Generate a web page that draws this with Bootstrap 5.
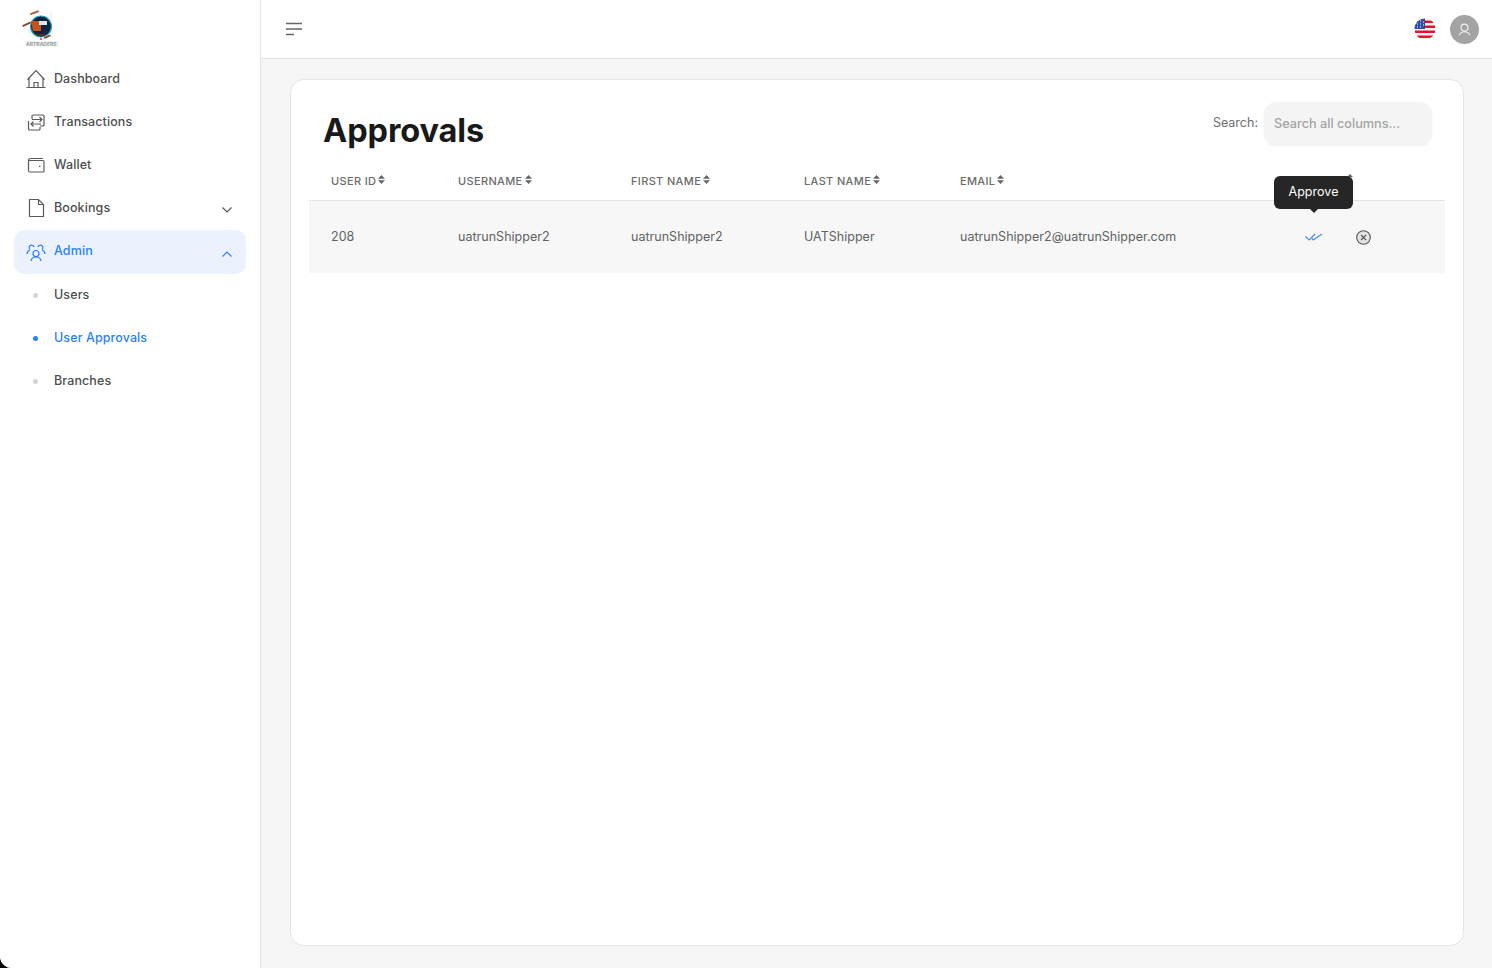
<!DOCTYPE html>
<html lang="en"><head><meta charset="utf-8"><title>Approvals</title>
<link href="https://cdn.jsdelivr.net/npm/bootstrap@5.3.0/dist/css/bootstrap.min.css" rel="stylesheet">
<style>
html,body{height:100%;overflow:hidden}
body{font-family:Inter,"Liberation Sans",sans-serif;background:#000;color:#4b4b4b}
.app-shell{height:968px;background:#f5f5f5;border-bottom-left-radius:12px;overflow:hidden}
.side{width:261px;flex:none;background:#fff;border-right:1px solid #e4e4e4;padding:0 14px}
.logo-box{height:58px;padding:9px 0 0 7px}
.menu-item{height:43px;display:flex;align-items:center;font-size:12.5px;font-weight:500;color:#4f4f4f;padding-left:12px;border-radius:10px;letter-spacing:.1px;position:relative}
.menu-item svg.ic{width:20px;height:20px;margin:-1px 8px 0 0;flex:none;fill:none;stroke:#5a5a5a;stroke-width:1.2}
.menu-item .lbl{margin-top:-1px}
.menu-item .chev{position:absolute;left:207px;top:19px;width:12px;height:8px;fill:none;stroke:#555;stroke-width:1.2}
.menu-open{background:#ebf2fe;color:#2b7fff;height:44px}
.menu-open .chev{top:20px}
.menu-open svg.ic,.menu-open .chev{stroke:#2b7fff!important}
.sub-on{color:#2b7fff}
.dot{width:5px;height:5px;border-radius:50%;background:#d5d5d5;margin:0 16px 0 7px;flex:none}
.sub-on .dot{background:#2b7fff}
.top-bar{height:59px;background:#fff;border-bottom:1px solid #e2e2e2;padding:0 13px 0 24px}
.main-area{padding:20px 28px 22px 29px}
.panel{background:#fff;border:1px solid #e6e6e6;border-radius:14px;height:867px;padding:22px 18px 0}
.page-title{font-size:32.5px;font-weight:700;color:#191919;margin:9px 0 0 14px;line-height:40px;letter-spacing:-.1px}
.search-lbl{font-size:12.5px;color:#6f6f6f;margin-top:12px}
.search-in{width:168px;height:43px;background:#f4f4f4;border:0;border-radius:12px;font-size:12.7px;padding:0 10px;box-shadow:0 1px 2px rgba(0,0,0,.06);font-family:inherit}
.search-in::placeholder{color:#a4a4a4;font-weight:500;opacity:1}
.search-wrap{margin-right:13px}
.data-tbl{width:1136px;table-layout:fixed;margin:11px 0 0;border-collapse:collapse}
.data-tbl th{height:38px;font-size:11px;font-weight:500;color:#6b6b6b;letter-spacing:.35px;padding:0 0 0 22px;border-bottom:1px solid #e4e4e4;vertical-align:middle;white-space:nowrap}
.data-tbl td{height:73px;background:#f7f7f7;font-size:12.5px;color:#626262;padding:1px 0 0 22px;letter-spacing:.02px;vertical-align:middle;white-space:nowrap}
.sort-mark{display:inline-block;width:7px;height:9px;margin-left:2px;vertical-align:1px}
.act-cell{position:relative}
.tip-box{position:absolute;left:12px;top:-25px;width:79px;height:33px;background:#262626;color:#fff;border-radius:6px;font-size:12.5px;display:flex;align-items:center;justify-content:center;z-index:2}
.tip-box::after{content:"";position:absolute;left:36px;bottom:-4px;border:4px solid transparent;border-bottom:0;border-top-color:#262626}
.hdr-dot{position:absolute;left:85px;top:-27px;width:6px;height:6px}
.act-ic{position:absolute;z-index:1}
</style></head><body>
<div class="app-shell d-flex">
<aside class="side">
 <div class="logo-box">
 <svg width="40" height="40" viewBox="0 0 40 40"><rect x="9" y="3" width="9" height="1.800" fill="#a8552d" transform="rotate(-20 13 4)"/><rect x="1" y="14.500" width="9" height="2" fill="#8a4a2b" transform="rotate(-25 5 15)"/><rect x="23" y="27" width="7" height="1.800" fill="#8a4a2b" transform="rotate(-25 26 28)"/><circle cx="20" cy="17.500" r="10.500" fill="#12233f" stroke="#2aa3c4" stroke-width="1.200"/><path d="M10 12h10v10h-8z" fill="#c4541b"/><rect x="18" y="12" width="8" height="4" fill="#dfe7ee"/><path d="M14 25l6 3 6-3z" fill="#5a2d20"/><circle cx="20" cy="30" r="1.100" fill="#e0406a"/><path d="M30 2v12M6 20l5 8" stroke="#bfe9f2" stroke-width=".6"/><rect x="4" y="32" width="34" height="5.500" fill="#eef6f3"/><text x="5" y="36.800" font-size="5" font-weight="700" fill="#9a9e9c" font-family="Inter,sans-serif">ARTRADERS</text></svg>
 </div>
 <nav class="d-flex flex-column">
 <div class="menu-item"><svg class="ic" viewBox="0 0 20 20"><path d="M.5 18.500h19M3 18.500V9M17 18.500V9M1.500 10.500L10 1.500l8.500 9M8 18.500v-5h4v5"/></svg><span class="lbl">Dashboard</span></div>
 <div class="menu-item"><svg class="ic" viewBox="0 0 20 20"><path d="M6 7V4a1 1 0 0 1 1-1h10a1 1 0 0 1 1 1v9a1 1 0 0 1-1 1h-3M6 7.500h10M13.500 5l2.500 2.500L13.500 10M15 12H5M7.500 9.500L5 12l2.500 2.500M2.500 9v8a1 1 0 0 0 1 1H13a1 1 0 0 0 1-1v-2"/></svg><span class="lbl">Transactions</span></div>
 <div class="menu-item"><svg class="ic" viewBox="0 0 20 20"><path d="M2.500 5.500C2.500 4 3.500 3.500 5 3.500h12M2.500 5.500v10c0 1 .6 1.500 1.500 1.500h13c.6 0 1-.4 1-1V6.500c0-.6-.4-1-1-1zM13 11.300h1.500"/></svg><span class="lbl">Wallet</span></div>
 <div class="menu-item"><svg class="ic" viewBox="0 0 20 20"><path d="M3.500 1.500h9l5 5v12h-14zM12.500 1.500v5h5"/></svg><span class="lbl">Bookings</span><svg class="chev" viewBox="0 0 12 8"><path d="M1.500 1.500L6 6l4.500-4.500"/></svg></div>
 <div class="menu-item menu-open"><svg class="ic" viewBox="0 0 20 20"><path d="M7 11.500a3 3 0 1 0 6 0 3 3 0 1 0-6 0M5 19c.3-2.500 2-4 5-4s4.700 1.500 5 4M8 5a2.500 2.500 0 1 0-4 2.500M1 12c0-2 1-3.500 3-4.300M12 5a2.500 2.500 0 1 1 4 2.500M19 12c0-2-1-3.500-3-4.300"/></svg><span class="lbl">Admin</span><svg class="chev" viewBox="0 0 12 8"><path d="M1.500 6.500L6 2l4.500 4.500"/></svg></div>
 <div class="menu-item"><span class="dot"></span><span class="lbl">Users</span></div>
 <div class="menu-item sub-on"><span class="dot"></span><span class="lbl">User Approvals</span></div>
 <div class="menu-item"><span class="dot"></span><span class="lbl">Branches</span></div>
 </nav>
</aside>
<div class="flex-grow-1 d-flex flex-column">
 <header class="top-bar d-flex align-items-center justify-content-between flex-shrink-0">
  <svg width="18" height="14" viewBox="0 0 18 14" fill="none" stroke="#666" stroke-width="1.500"><path d="M1 1.500h16M1 7h16M1 12.500h8"/></svg>
  <div class="d-flex align-items-center" style="gap:14px">
   <svg width="22" height="22" viewBox="0 0 22 22"><defs><clipPath id="flagc"><circle cx="11" cy="11" r="10.500"/></clipPath></defs><g clip-path="url(#flagc)"><rect width="22" height="22" fill="#f4f4f4"/><path d="M0 2.500h22v2.500H0zM0 7.500h22v2.500H0zM0 12.500h22V15H0zM0 17.500h22V20H0z" fill="#e5112e"/><rect width="11" height="11" fill="#2a4fa5"/><path d="M3 3h1M6 3h1M3 6h1M6 6h1M3 9h1M6 9h1M9 4h1M9 7h1" stroke="#fff" stroke-width="1.200"/></g></svg>
   <svg width="29" height="29" viewBox="0 0 30 30" fill="none"><circle cx="15" cy="15" r="15" fill="#a3a3a3"/><circle cx="15" cy="13" r="3.600" stroke="#f2f2f2" stroke-width="1.200"/><path d="M9.500 21c1-2.500 3-3.700 5.500-3.700s4.500 1.200 5.500 3.700" stroke="#f2f2f2" stroke-width="1.200"/></svg>
  </div>
 </header>
 <main class="main-area flex-grow-1">
  <section class="panel">
   <div class="d-flex justify-content-between align-items-start">
    <h1 class="page-title">Approvals</h1>
    <div class="d-flex search-wrap" style="gap:6px"><label class="search-lbl" for="srch">Search:</label><input id="srch" class="search-in" placeholder="Search all columns..."></div>
   </div>
   <table class="data-tbl">
    <colgroup><col style="width:127px"><col style="width:173px"><col style="width:173px"><col style="width:156px"><col style="width:324px"><col style="width:50px"><col></colgroup>
    <thead><tr>
     <th>USER ID<svg class="sort-mark" viewBox="0 0 7 9" fill="#666"><path d="M3.500 0L7 3.700H0zM3.500 9L0 5.300h7z"/></svg></th>
     <th>USERNAME<svg class="sort-mark" viewBox="0 0 7 9" fill="#666"><path d="M3.500 0L7 3.700H0zM3.500 9L0 5.300h7z"/></svg></th>
     <th>FIRST NAME<svg class="sort-mark" viewBox="0 0 7 9" fill="#666"><path d="M3.500 0L7 3.700H0zM3.500 9L0 5.300h7z"/></svg></th>
     <th>LAST NAME<svg class="sort-mark" viewBox="0 0 7 9" fill="#666"><path d="M3.500 0L7 3.700H0zM3.500 9L0 5.300h7z"/></svg></th>
     <th>EMAIL<svg class="sort-mark" viewBox="0 0 7 9" fill="#666"><path d="M3.500 0L7 3.700H0zM3.500 9L0 5.300h7z"/></svg></th>
     <th></th><th></th>
    </tr></thead>
    <tbody><tr>
     <td>208</td><td>uatrunShipper2</td><td>uatrunShipper2</td><td>UATShipper</td><td>uatrunShipper2@uatrunShipper.com</td>
     <td class="act-cell">
      <svg class="hdr-dot" viewBox="0 0 6 6" fill="#666"><path d="M3 0l3 3H0z"/></svg>
      <div class="tip-box">Approve</div>
      <svg class="act-ic" style="left:43px;top:32px" width="18" height="9" viewBox="0 0 18 9" fill="none" stroke="#3f8cff" stroke-width="1.200"><polyline points="0.3,3.500 4.300,7 10,1"/><polyline points="7,5.500 8.300,7 17,1"/></svg>
     </td>
     <td class="act-cell"><svg class="act-ic" style="left:44px;top:29px" width="15" height="15" viewBox="0 0 15 15" fill="#e3e3e3" stroke="#555" stroke-width="1.100"><circle cx="7.500" cy="7.500" r="6.800"/><path d="M5 5l5 5M10 5l-5 5"/></svg></td>
    </tr></tbody>
   </table>
  </section>
 </main>
</div>
</div>
</body></html>
